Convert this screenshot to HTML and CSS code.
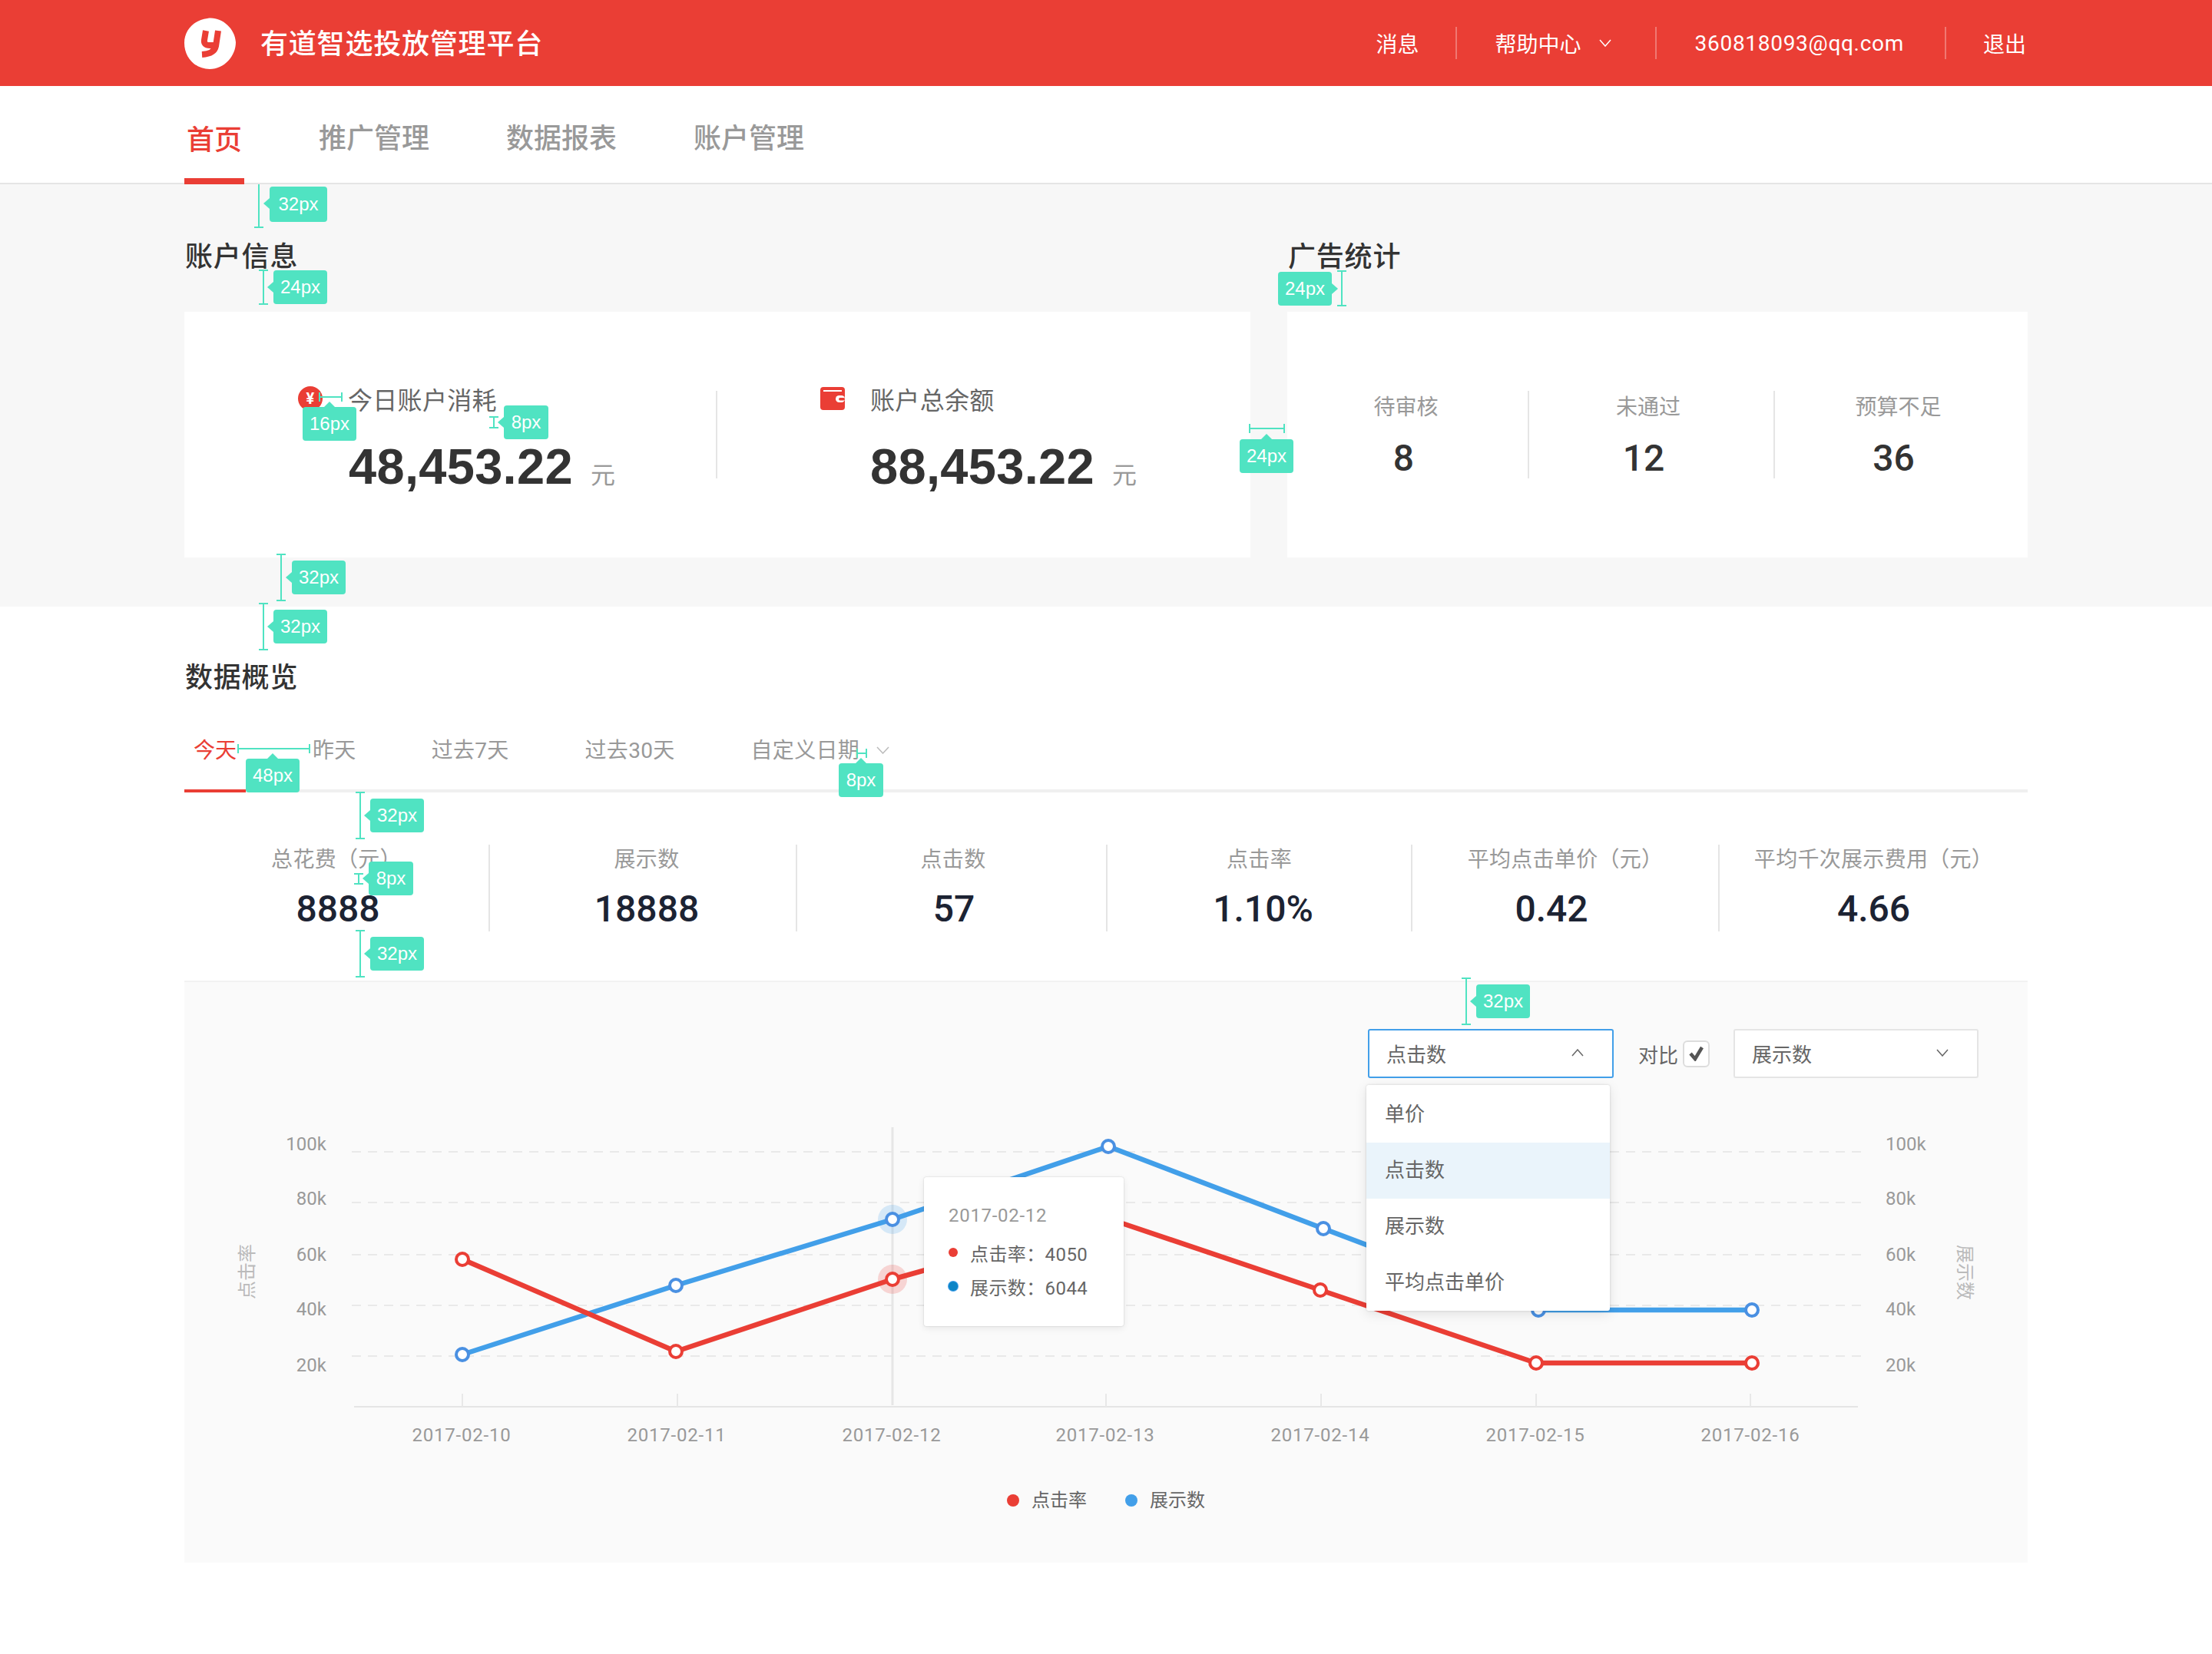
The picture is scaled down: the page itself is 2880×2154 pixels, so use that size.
FILE: index.html
```html
<!DOCTYPE html>
<html lang="zh-CN">
<head>
  <meta charset="UTF-8">
  <title>有道智选投放管理平台</title>
  <link rel="stylesheet" href="styles.css">
</head>
<body>

  <header class="top">
    <div class="wrap top-inner">
      <div class="brand">
        <svg class="logo" width="67" height="67" viewBox="0 0 67 67">
          <path d="M30 1C47-2 66 13 67 32C67 50 52 67 33 67C14 67 0 52 0 33C0 16 13 3 30 1Z" fill="#fff"/>
          <path d="M28 17L26 29Q25 36 33 36L38 36M44 17L41 37Q39 47 23 48" fill="none" stroke="#ea3e35" stroke-width="8"/>
        </svg>
        <span class="brand-name">有道智选投放管理平台</span>
      </div>
      <div class="links">
        <a class="link link-msg">消息</a>
        <a class="link link-help">帮助中心
          <svg class="link-arrow" width="16" height="10" viewBox="0 0 16 10"><path d="M1 1L8 9L15 1" fill="none" stroke="#fff" stroke-width="1.5"/></svg>
        </a>
        <a class="link link-mail">360818093@qq.com</a>
        <a class="link link-last">退出</a>
      </div>
    </div>
  </header>

  <nav class="nav">
    <div class="wrap nav-inner">
      <a class="nav-item on">首页</a>
      <a class="nav-item">推广管理</a>
      <a class="nav-item">数据报表</a>
      <a class="nav-item">账户管理</a>
    </div>
  </nav>

  <section class="summary">
    <div class="wrap summary-grid">
      <div>
        <h2 class="title">账户信息</h2>
        <div class="card acct">
          <div class="acct-item acct-today">
            <div class="acct-label">
              <span class="yen">¥</span>
              <span>今日账户消耗</span>
            </div>
            <div class="acct-value">48,453.22<span class="unit">元</span></div>
          </div>
          <div class="acct-item acct-total">
            <div class="acct-label">
              <svg class="wallet" width="32" height="32" viewBox="0 0 32 32">
                <rect y="1" width="32" height="30" rx="4" fill="#ea3e35"/>
                <rect x="4" y="5" width="24" height="2" fill="#fff"/>
                <rect x="20" y="12" width="12" height="9" rx="4.5" fill="#fff"/>
                <rect x="24" y="15" width="8" height="3.5" rx="1.7" fill="#ea3e35"/>
              </svg>
              <span>账户总余额</span>
            </div>
            <div class="acct-value">88,453.22<span class="unit">元</span></div>
          </div>
        </div>
      </div>
      <div>
        <h2 class="title">广告统计</h2>
        <div class="card ads">
          <div class="ad">
            <div class="ad-label">待审核</div>
            <div class="ad-value">8</div>
          </div>
          <div class="ad">
            <div class="ad-label">未通过</div>
            <div class="ad-value">12</div>
          </div>
          <div class="ad">
            <div class="ad-label">预算不足</div>
            <div class="ad-value">36</div>
          </div>
        </div>
      </div>
    </div>
  </section>

  <section class="wrap overview">
    <h2 class="title">数据概览</h2>

    <div class="range">
      <a class="range-item on">今天</a>
      <a class="range-item">昨天</a>
      <a class="range-item">过去7天</a>
      <a class="range-item">过去30天</a>
      <a class="range-item">自定义日期
        <svg class="range-arrow" width="17" height="10" viewBox="0 0 17 10"><path d="M1 1L8.5 9L16 1" fill="none" stroke="#bbb" stroke-width="1.5"/></svg>
      </a>
    </div>

    <div class="stats">
      <div class="stat"><div class="stat-label">总花费（元）</div><div class="stat-value">8888</div></div>
      <div class="stat"><div class="stat-label">展示数</div><div class="stat-value">18888</div></div>
      <div class="stat"><div class="stat-label">点击数</div><div class="stat-value">57</div></div>
      <div class="stat"><div class="stat-label">点击率</div><div class="stat-value">1.10%</div></div>
      <div class="stat"><div class="stat-label">平均点击单价（元）</div><div class="stat-value">0.42</div></div>
      <div class="stat"><div class="stat-label">平均千次展示费用（元）</div><div class="stat-value">4.66</div></div>
    </div>

    <div class="panel">
      <div class="toolbar">
        <div class="select select-open">
          <span>点击数</span>
          <svg width="16" height="10" viewBox="0 0 16 10"><path d="M1 9L8 1L15 9" fill="none" stroke="#666" stroke-width="1.5"/></svg>
          <ul class="dropdown">
            <li>单价</li>
            <li class="hover">点击数</li>
            <li>展示数</li>
            <li>平均点击单价</li>
          </ul>
        </div>
        <span class="compare">对比</span>
        <span class="checkbox">
          <svg width="22" height="20" viewBox="0 0 22 20"><path d="M3 10L9 17L18 2" fill="none" stroke="#555" stroke-width="4.5"/></svg>
        </span>
        <div class="select select-second">
          <span>展示数</span>
          <svg width="16" height="10" viewBox="0 0 16 10"><path d="M1 1L8 9L15 1" fill="none" stroke="#666" stroke-width="1.5"/></svg>
        </div>
      </div>

      <!-- viewBox uses page coordinates -->
      <svg class="chart" width="2400" height="536" viewBox="240 1404 2400 536">
        <g class="grid">
          <path d="M458 1500H2423M458 1566H2423M458 1634H2423M458 1700H2423M458 1766H2423"/>
        </g>
        <path class="axis" d="M461 1832H2419"/>
        <path class="tick" d="M602 1815V1832M882 1815V1832M1440 1815V1832M1720 1815V1832M2000 1815V1832M2279 1815V1832"/>
        <path class="cross" d="M1162 1468V1830"/>

        <g class="y-label y-left">
          <text x="425" y="1490">100k</text>
          <text x="425" y="1561">80k</text>
          <text x="425" y="1634">60k</text>
          <text x="425" y="1705">40k</text>
          <text x="425" y="1778">20k</text>
        </g>
        <g class="y-label">
          <text x="2455" y="1490">100k</text>
          <text x="2455" y="1561">80k</text>
          <text x="2455" y="1634">60k</text>
          <text x="2455" y="1705">40k</text>
          <text x="2455" y="1778">20k</text>
        </g>
        <text class="y-title" transform="translate(322 1656) rotate(-90)">点击率</text>
        <text class="y-title" transform="translate(2558 1657) rotate(90)">展示数</text>

        <g class="x-label">
          <text x="601" y="1869">2017-02-10</text>
          <text x="881" y="1869">2017-02-11</text>
          <text x="1161" y="1869">2017-02-12</text>
          <text x="1439" y="1869">2017-02-13</text>
          <text x="1719" y="1869">2017-02-14</text>
          <text x="1999" y="1869">2017-02-15</text>
          <text x="2279" y="1869">2017-02-16</text>
        </g>

        <circle class="halo-blue" cx="1162" cy="1588" r="19"/>
        <circle class="halo-red" cx="1162" cy="1666" r="19"/>

        <polyline class="line-blue" points="602,1764 880,1674 1162,1588 1443,1493 1723,1600 2003,1706 2281,1706"/>
        <polyline class="line-red" points="602,1640 880,1760 1162,1666 1443,1587 1719,1680 2000,1775 2281,1775"/>

        <g class="dots-blue">
          <circle cx="602" cy="1764" r="8"/>
          <circle cx="880" cy="1674" r="8"/>
          <circle cx="1162" cy="1588" r="8"/>
          <circle cx="1443" cy="1493" r="8"/>
          <circle cx="1723" cy="1600" r="8"/>
          <circle cx="2003" cy="1706" r="8"/>
          <circle cx="2281" cy="1706" r="8"/>
        </g>
        <g class="dots-red">
          <circle cx="602" cy="1640" r="8"/>
          <circle cx="880" cy="1760" r="8"/>
          <circle cx="1162" cy="1666" r="8"/>
          <circle cx="1719" cy="1680" r="8"/>
          <circle cx="2000" cy="1775" r="8"/>
          <circle cx="2281" cy="1775" r="8"/>
        </g>
      </svg>

      <div class="tip">
        <div class="tip-date">2017-02-12</div>
        <div class="tip-row"><i class="dot dot-red"></i>点击率：4050</div>
        <div class="tip-row"><i class="dot dot-blue"></i>展示数：6044</div>
      </div>

      <div class="legend">
        <span class="legend-item"><i class="legend-dot dot-red"></i>点击率</span>
        <span class="legend-item"><i class="legend-dot dot-sky"></i>展示数</span>
      </div>
    </div>
  </section>

  <!-- spec annotations drawn over the page -->
  <div class="marks">
    <i class="bar v b1"></i><span class="tag left t1">32px</span>
    <i class="bar v b2"></i><span class="tag left t2">24px</span>
    <i class="bar v b3"></i><span class="tag right t3">24px</span>
    <i class="bar h b4"></i><span class="tag up t4">16px</span>
    <i class="bar v b5"></i><span class="tag left t5">8px</span>
    <i class="bar h b6"></i><span class="tag up t6">24px</span>
    <i class="bar v b7"></i><span class="tag left t7">32px</span>
    <i class="bar v b8"></i><span class="tag left t8">32px</span>
    <i class="bar h b9"></i><span class="tag up t9">48px</span>
    <i class="bar h b10"></i><span class="tag up t10">8px</span>
    <i class="bar v b11"></i><span class="tag left t11">32px</span>
    <i class="bar v b12"></i><span class="tag left t12">8px</span>
    <i class="bar v b13"></i><span class="tag left t13">32px</span>
    <i class="bar v b14"></i><span class="tag left t14">32px</span>
  </div>

</body>
</html>
```

FILE: styles.css
```css
* {
  box-sizing: border-box;
}
body {
  margin: 0;
  font-family: Roboto, "Noto Sans CJK SC", sans-serif;
  color: #333;
  background: #fff;
}
h2, ul {
  margin: 0;
  padding: 0;
}
.wrap {
  width: 2400px;
  margin: 0 auto;
}

/* header */
.top {
  height: 112px;
  background: #ea3e35;
  color: #fff;
}
.top-inner {
  height: 100%;
  display: flex;
  align-items: center;
  justify-content: space-between;
}
.brand {
  display: flex;
  align-items: center;
}
.brand-name {
  margin-left: 32px;
  margin-top: 4px;
  font-size: 36px;
  font-weight: 500;
  line-height: 50px;
  letter-spacing: 0.8px;
}
.links {
  display: flex;
  align-items: center;
}
.link {
  display: flex;
  align-items: center;
  height: 42px;
  padding: 0 49px 0 50px;
  font-size: 28px;
  border-right: 2px solid rgba(255, 255, 255, 0.3);
}
.link-msg {
  padding-right: 47px;
}
.link-help {
  padding-right: 57px;
}
.link-arrow {
  margin-left: 23px;
}
.link-mail {
  letter-spacing: 0.7px;
  padding-right: 53px;
}
.link-last {
  padding: 0 2px 0 48px;
  border-right: 0;
}

/* nav */
.nav {
  height: 128px;
  border-bottom: 2px solid #e5e5e5;
}
.nav-inner {
  display: flex;
}
.nav-item {
  display: block;
  height: 128px;
  margin-right: 100px;
  padding-top: 44px;
  font-size: 36px;
  font-weight: 500;
  line-height: 50px;
  color: #999;
}
.nav-item.on {
  margin-right: 97px;
  padding: 46px 3px 0;
  color: #ea3e35;
  border-bottom: 8px solid #ea3e35;
}

/* account + ads */
.summary {
  height: 550px;
  padding-top: 70px;
  background: #f7f7f7;
}
.summary-grid {
  display: grid;
  grid-template-columns: 1388px 964px;
  column-gap: 48px;
}
.title {
  padding-left: 1px;
  font-size: 36px;
  font-weight: 500;
  line-height: 50px;
  letter-spacing: 0.8px;
  color: #333;
}
.card {
  height: 320px;
  margin-top: 46px;
  background: #fff;
  display: flex;
}
.acct-item {
  width: 696px;
  height: 114px;
  margin-top: 103px;
  border-right: 2px solid #e5e5e5;
}
.acct-today {
  padding-left: 148px;
}
.acct-total {
  padding-left: 134px;
  border-right: 0;
}
.acct-label {
  display: flex;
  align-items: center;
  height: 32px;
  margin-top: -6px;
  font-size: 32px;
  letter-spacing: 0.3px;
  color: #666;
}
.yen {
  width: 32px;
  height: 32px;
  margin-right: 33px;
  border-radius: 50%;
  background: #ea3e35;
  color: #fff;
  font-size: 20px;
  font-weight: 700;
  line-height: 32px;
  text-align: center;
}
.wallet {
  margin-right: 33px;
}
.acct-value {
  margin: 37px 0 0 66px;
  font-family: "Liberation Sans", "Noto Sans CJK SC", sans-serif;
  font-size: 65px;
  font-weight: 700;
  line-height: 72px;
  letter-spacing: 0.3px;
  white-space: nowrap;
}
.acct-total .acct-value {
  margin-left: 65px;
}
.unit {
  margin-left: 23px;
  font-size: 32px;
  font-weight: 400;
  color: #999;
}
.ad {
  width: 320px;
  height: 114px;
  margin-top: 103px;
  padding-top: 2px;
  text-align: center;
  border-right: 2px solid #e5e5e5;
}
.ad:first-child {
  width: 315px;
}
.ad:last-child {
  width: 329px;
  border-right: 0;
}
.ad-label {
  padding-right: 8px;
  font-size: 28px;
  line-height: 40px;
  color: #999;
}
.ad-value {
  margin-top: 16px;
  padding-right: 20px;
  font-size: 48px;
  font-weight: 500;
  line-height: 60px;
}
.ad:first-child .ad-label {
  padding-right: 4px;
}
.ad:first-child .ad-value {
  padding-right: 10px;
}

/* overview */
.overview {
  padding-top: 66px;
}
.overview .title {
  padding-top: 2px;
  height: 50px;
}
.range {
  display: flex;
  margin-top: 38px;
  border-bottom: 4px solid #f0f0f0;
}
.range-item {
  display: flex;
  align-items: flex-start;
  height: 88px;
  margin-right: 98px;
  margin-bottom: -4px;
  font-size: 28px;
  line-height: 68px;
  letter-spacing: 0.3px;
  color: #999;
}
.range-item:nth-child(3),
.range-item:nth-child(4) {
  margin-right: 99px;
}
.range-item.on {
  margin-right: 87px;
  padding: 0 12px;
  color: #ea3e35;
  border-bottom: 4px solid #ea3e35;
  letter-spacing: 0;
}
.range-arrow {
  margin: 28px 0 0 22px;
}
.stats {
  display: grid;
  grid-template-columns: 398px 400px 404px 397px 400px 401px;
  margin-top: 68px;
  padding-bottom: 64px;
  border-bottom: 2px solid #f2f2f2;
}
.stat {
  height: 113px;
  padding-top: 2px;
  text-align: center;
  border-right: 2px solid #e5e5e5;
}
.stat:last-child {
  border-right: 0;
}
.stat-label {
  font-size: 28px;
  line-height: 36px;
  letter-spacing: 0.3px;
  color: #999;
}
.stat-value {
  margin-top: 17px;
  font-size: 48px;
  font-weight: 500;
  line-height: 58px;
  color: #1c2333;
}
.stat:nth-child(1) .stat-value {
  padding-left: 4px;
}
.stat:nth-child(2) .stat-label,
.stat:nth-child(2) .stat-value {
  padding-left: 10px;
}
.stat:nth-child(3) .stat-label {
  padding-left: 4px;
}
.stat:nth-child(3) .stat-value {
  padding-left: 6px;
}
.stat:nth-child(4) .stat-value {
  padding-left: 10px;
}
.stat:nth-child(5) .stat-value {
  padding-right: 36px;
}

/* chart panel */
.panel {
  position: relative;
  height: 756px;
  padding-top: 61px;
  background: #fafafa;
}
.toolbar {
  position: relative;
  z-index: 2;
  display: flex;
  align-items: center;
  justify-content: flex-end;
  padding-right: 64px;
  font-size: 26px;
  color: #666;
}
.select {
  position: relative;
  display: flex;
  align-items: center;
  justify-content: space-between;
  width: 320px;
  height: 64px;
  padding: 0 37px 2px 22px;
  background: #fff;
  border: 2px solid #e5e5e5;
  border-radius: 3px;
}
.select-open {
  border-color: #429fe9;
}
.select-second {
  width: 319px;
  margin-left: 31px;
}
.dropdown {
  position: absolute;
  top: 71px;
  left: -4px;
  width: 317px;
  height: 294px;
  padding-top: 2px;
  list-style: none;
  background: #fff;
  border-radius: 3px;
  box-shadow: 0 0 3px rgba(0, 0, 0, 0.15), 0 4px 16px rgba(0, 0, 0, 0.1);
}
.dropdown li {
  height: 73px;
  padding-left: 24px;
  line-height: 73px;
}
.dropdown li.hover {
  background: #eaf4fb;
}
.compare {
  margin-left: 32px;
}
.checkbox {
  display: flex;
  align-items: center;
  justify-content: center;
  width: 35px;
  height: 35px;
  margin-left: 6px;
  background: #fff;
  border: 2px solid #ddd;
  border-radius: 6px;
}
.chart {
  display: block;
}
.grid path {
  fill: none;
  stroke: #e9e9e9;
  stroke-width: 2;
  stroke-dasharray: 12 9;
}
.axis {
  stroke: #e5e5e5;
  stroke-width: 2;
}
.tick {
  stroke: #e8e8e8;
  stroke-width: 2;
}
.cross {
  stroke: #e6e6e6;
  stroke-width: 3;
}
.y-label text,
.x-label text,
.y-title {
  font-size: 24px;
  fill: #999;
  dominant-baseline: central;
}
.y-left text {
  text-anchor: end;
}
.y-title {
  fill: #bbb;
  text-anchor: middle;
}
.x-label text {
  text-anchor: middle;
  letter-spacing: 0.8px;
}
.line-blue,
.line-red {
  fill: none;
  stroke-width: 6.5;
  stroke-linejoin: round;
}
.line-blue {
  stroke: #429fe9;
}
.line-red {
  stroke: #ea3e35;
}
.dots-blue circle,
.dots-red circle {
  fill: #fff;
  stroke-width: 4;
}
.dots-blue circle {
  stroke: #4a90e2;
}
.dots-red circle {
  stroke: #ea3e35;
}
.halo-blue {
  fill: #429fe9;
  opacity: 0.2;
}
.halo-red {
  fill: #ea3e35;
  opacity: 0.2;
}
.tip {
  position: absolute;
  z-index: 1;
  left: 963px;
  top: 254px;
  width: 260px;
  height: 194px;
  padding: 32px 0 0 32px;
  background: #fff;
  border-radius: 3px;
  box-shadow: 0 0 2px rgba(0, 0, 0, 0.2), 0 3px 10px rgba(0, 0, 0, 0.08);
  font-size: 24px;
  color: #666;
}
.tip-date {
  margin-bottom: 8px;
  line-height: 36px;
  letter-spacing: 0.7px;
  color: #999;
}
.tip-row {
  display: flex;
  align-items: center;
  height: 44px;
  letter-spacing: 0.4px;
}
.dot {
  width: 12px;
  height: 12px;
  margin-right: 16px;
  border-radius: 50%;
}
.dot-red {
  background: #ea3e35;
}
.dot-blue {
  background: #0b84c6;
  box-shadow: 0 0 0 1px #429fe9;
}
.dot-sky {
  background: #429fe9;
}
.legend {
  display: flex;
  justify-content: center;
  gap: 50px;
  padding-top: 2px;
  font-size: 24px;
  line-height: 24px;
  color: #666;
}
.legend-item {
  display: flex;
  align-items: center;
}
.legend-dot {
  width: 16px;
  height: 16px;
  margin-right: 16px;
  border-radius: 50%;
}

/* annotations */
.marks {
  position: absolute;
  top: 0;
  left: 0;
  z-index: 5;
}
.bar {
  position: absolute;
}
.bar.v {
  width: 12px;
  border-top: 2px solid #50e3c2;
  border-bottom: 2px solid #50e3c2;
  background: linear-gradient(#50e3c2, #50e3c2) center / 2px 100% no-repeat;
}
.bar.h {
  height: 12px;
  border-left: 2px solid #50e3c2;
  border-right: 2px solid #50e3c2;
  background: linear-gradient(#50e3c2, #50e3c2) center / 100% 2px no-repeat;
}
.tag {
  position: absolute;
  display: flex;
  align-items: center;
  justify-content: center;
  width: 70px;
  height: 44px;
  border-radius: 4px;
  background: #50e3c2;
  color: #fff;
  font-family: "Liberation Sans", sans-serif;
  font-size: 24px;
}
.tag::before {
  content: "";
  position: absolute;
  border: 7px solid transparent;
}
.tag.left::before {
  left: -8px;
  top: 15px;
  border-left-width: 0;
  border-right: 8px solid #50e3c2;
}
.tag.right::before {
  right: -8px;
  top: 15px;
  border-right-width: 0;
  border-left: 8px solid #50e3c2;
}
.tag.up::before {
  top: -7px;
  left: 50%;
  margin-left: -7px;
  border-top-width: 0;
  border-bottom: 7px solid #50e3c2;
}

.b1 { left: 331px; top: 240px; height: 57px; border-top: 0 !important; }
.t1 { left: 351px; top: 243px; width: 75px; height: 46px; }
.b2 { left: 337px; top: 351px; height: 46px; }
.t2 { left: 356px; top: 352px; }
.b3 { left: 1741px; top: 352px; height: 47px; }
.t3 { left: 1664px; top: 354px; }
.b4 { left: 415px; top: 511px; width: 31px; }
.t4 { left: 394px; top: 530px; }
.b5 { left: 637px; top: 542px; height: 16px; }
.t5 { left: 656px; top: 528px; width: 58px; }
.b6 { left: 1626px; top: 552px; width: 47px; }
.t6 { left: 1614px; top: 572px; }
.b7 { left: 360px; top: 721px; height: 62px; }
.t7 { left: 380px; top: 730px; }
.b8 { left: 337px; top: 785px; height: 62px; }
.t8 { left: 356px; top: 794px; }
.b9 { left: 309px; top: 969px; width: 95px; }
.t9 { left: 320px; top: 988px; }
.b10 { left: 1115px; top: 975px; width: 14px; }
.t10 { left: 1092px; top: 994px; width: 58px; }
.b11 { left: 463px; top: 1031px; height: 62px; }
.t11 { left: 482px; top: 1040px; }
.b12 { left: 461px; top: 1137px; height: 15px; }
.t12 { left: 480px; top: 1122px; width: 58px; }
.b13 { left: 463px; top: 1211px; height: 62px; }
.t13 { left: 482px; top: 1220px; }
.b14 { left: 1903px; top: 1273px; height: 62px; }
.t14 { left: 1922px; top: 1282px; }
```
